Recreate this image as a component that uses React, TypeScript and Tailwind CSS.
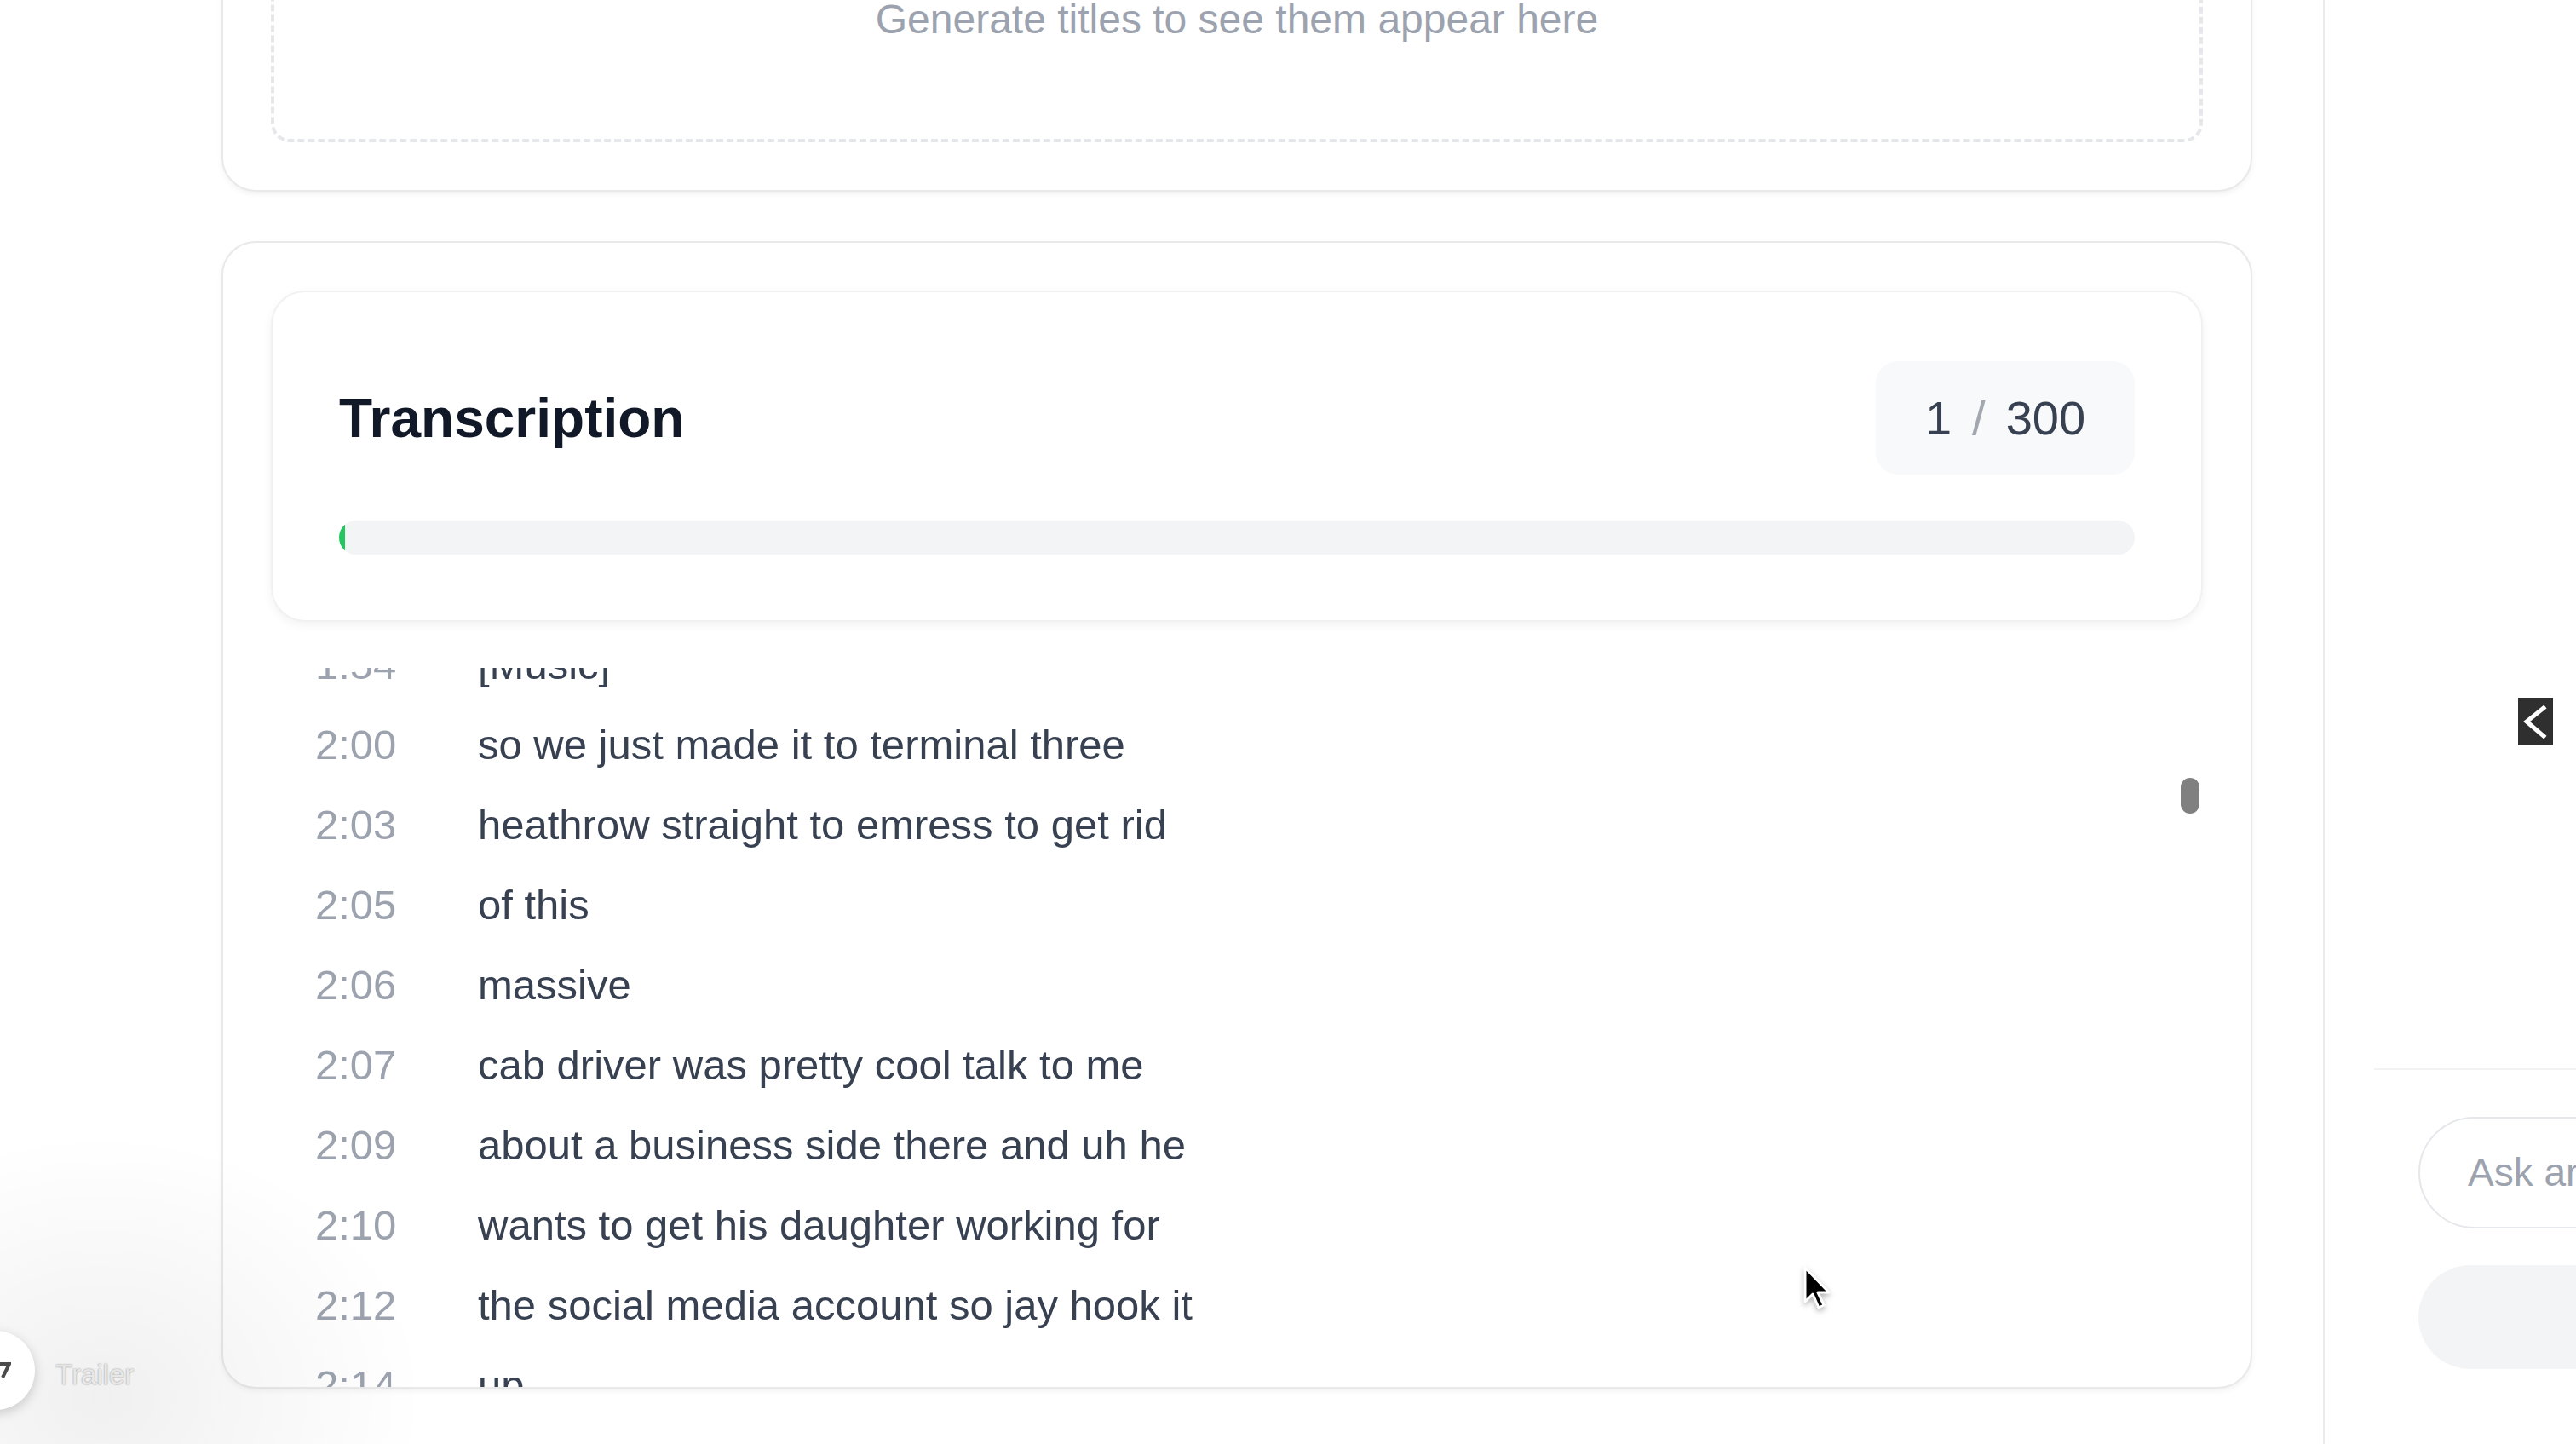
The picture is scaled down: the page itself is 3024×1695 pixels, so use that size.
import React from "react"

const ROWS = [
  { t: "1:54", text: "[Music]" },
  { t: "2:00", text: "so we just made it to terminal three" },
  { t: "2:03", text: "heathrow straight to emress to get rid" },
  { t: "2:05", text: "of this" },
  { t: "2:06", text: "massive" },
  { t: "2:07", text: "cab driver was pretty cool talk to me" },
  { t: "2:09", text: "about a business side there and uh he" },
  { t: "2:10", text: "wants to get his daughter working for" },
  { t: "2:12", text: "the social media account so jay hook it" },
  { t: "2:14", text: "up" },
  { t: "2:16", text: "so let's go" },
]

export default function App() {
  return (
    <div className="relative flex h-[1695px] w-[3024px] overflow-hidden bg-white font-['Liberation_Sans',Arial,sans-serif]">
      <main className="w-[2729px] shrink-0 border-r-2 border-[#ebebeb] pl-[260px]">
        {/* titles card, scrolled mostly out of view */}
        <section className="mt-[-180px] w-[2384px] rounded-[40px] border-2 border-[#e9e9e9] bg-white p-[56px] shadow-[0_3px_6px_rgba(0,0,0,0.05)]">
          <div className="flex h-[289px] items-center justify-center rounded-[22px] border-[4px] border-dashed border-[#e6e7ea]">
            <span className="text-[48px] text-[#9ca3af]">Generate titles to see them appear here</span>
          </div>
        </section>

        {/* transcription card */}
        <section className="mt-[58px] flex h-[1347px] w-[2384px] flex-col overflow-hidden rounded-[40px] border-2 border-[#e9e9e9] bg-white px-[56px] pt-[56px] shadow-[0_3px_6px_rgba(0,0,0,0.05)]">
          <div className="rounded-[40px] border-2 border-[#f1f1f1] bg-white px-[78px] pb-[77px] pt-[81px] shadow-[0_4px_12px_rgba(0,0,0,0.05)]">
            <div className="flex items-center justify-between">
              <h2 className="text-[64px] font-bold text-[#111827]">Transcription</h2>
              <div className="flex h-[133px] w-[304px] items-center justify-center gap-[24px] rounded-[26px] bg-[#f8f9fa] text-[56px] text-[#374151]">
                <span>1</span>
                <span className="text-[#a3a8b0]">/</span>
                <span>300</span>
              </div>
            </div>
            <div className="mt-[54px] h-[40px] overflow-hidden rounded-full bg-[#f3f4f6]">
              <div className="h-full w-[0.34%] rounded-full bg-[#22c55e]" />
            </div>
          </div>

          <div className="relative mt-[54px] flex-1 overflow-hidden">
            <div className="mt-[-50px] pl-[52px]">
              {ROWS.map(r => (
                <div key={r.t} className="flex h-[94px] items-center text-[49px]">
                  <div className="w-[191px] shrink-0 text-[#9ca3af]">{r.t}</div>
                  <div className="text-[#374151]">{r.text}</div>
                </div>
              ))}
            </div>
            <div className="absolute right-[4px] top-[129px] h-[42px] w-[22px] rounded-full bg-[#808080]" />
          </div>
        </section>
      </main>

      <aside className="relative flex w-[800px] shrink-0 flex-col justify-end pb-[88px] pl-[58px]">
        <button className="absolute left-[227px] top-[819px] flex h-[56px] w-[41px] items-center justify-center bg-[#2f2f2f]">
          <svg width="41" height="56" viewBox="0 0 41 56" fill="none">
            <polyline points="30,12 10,28 30,45" stroke="white" strokeWidth="5" strokeLinecap="square" />
          </svg>
        </button>
        <div className="border-t-2 border-[#f2f2f2] pl-[52px] pt-[55px]">
          <div className="flex h-[131px] w-[700px] items-center overflow-hidden whitespace-nowrap rounded-full border-2 border-[#e5e7eb] px-[56px] text-[46px] text-[#9ca3af]">
            Ask anything about this video
          </div>
          <div className="mt-[43px] h-[122px] w-[700px] rounded-full bg-[#f3f4f6]" />
        </div>
      </aside>

      {/* floating trailer chip, bottom left */}
      <div className="absolute left-[-260px] top-[1330px] h-[620px] w-[760px] rounded-full bg-[radial-gradient(closest-side,rgba(0,0,0,0.06),rgba(0,0,0,0))]" />
      <div className="absolute left-[-52px] top-[1562px] flex h-[93px] w-[93px] items-center justify-end rounded-full bg-white pr-[28px] shadow-[0_4px_14px_rgba(0,0,0,0.18)]">
        <svg width="16" height="22" viewBox="0 0 16 22" fill="none">
          <path d="M1 3 H14 L6 19" stroke="#4b4b4b" strokeWidth="4" />
        </svg>
      </div>
      <div className="absolute left-[65px] top-[1597px] text-[33px] leading-none text-[#e8e8e8] [text-shadow:0_0_2px_rgba(0,0,0,0.45)]">
        Trailer
      </div>

      {/* mouse pointer */}
      <svg className="absolute left-[2114px] top-[1484px] drop-shadow-[0_3px_3px_rgba(0,0,0,0.3)]" width="36" height="58" viewBox="0 0 36 58" fill="none">
        <path d="M5 4 L5 44 L14 35 L21 51 L27 48 L20 33 L33 33 Z" fill="black" stroke="white" strokeWidth="3" strokeLinejoin="round" />
      </svg>
    </div>
  )
}
